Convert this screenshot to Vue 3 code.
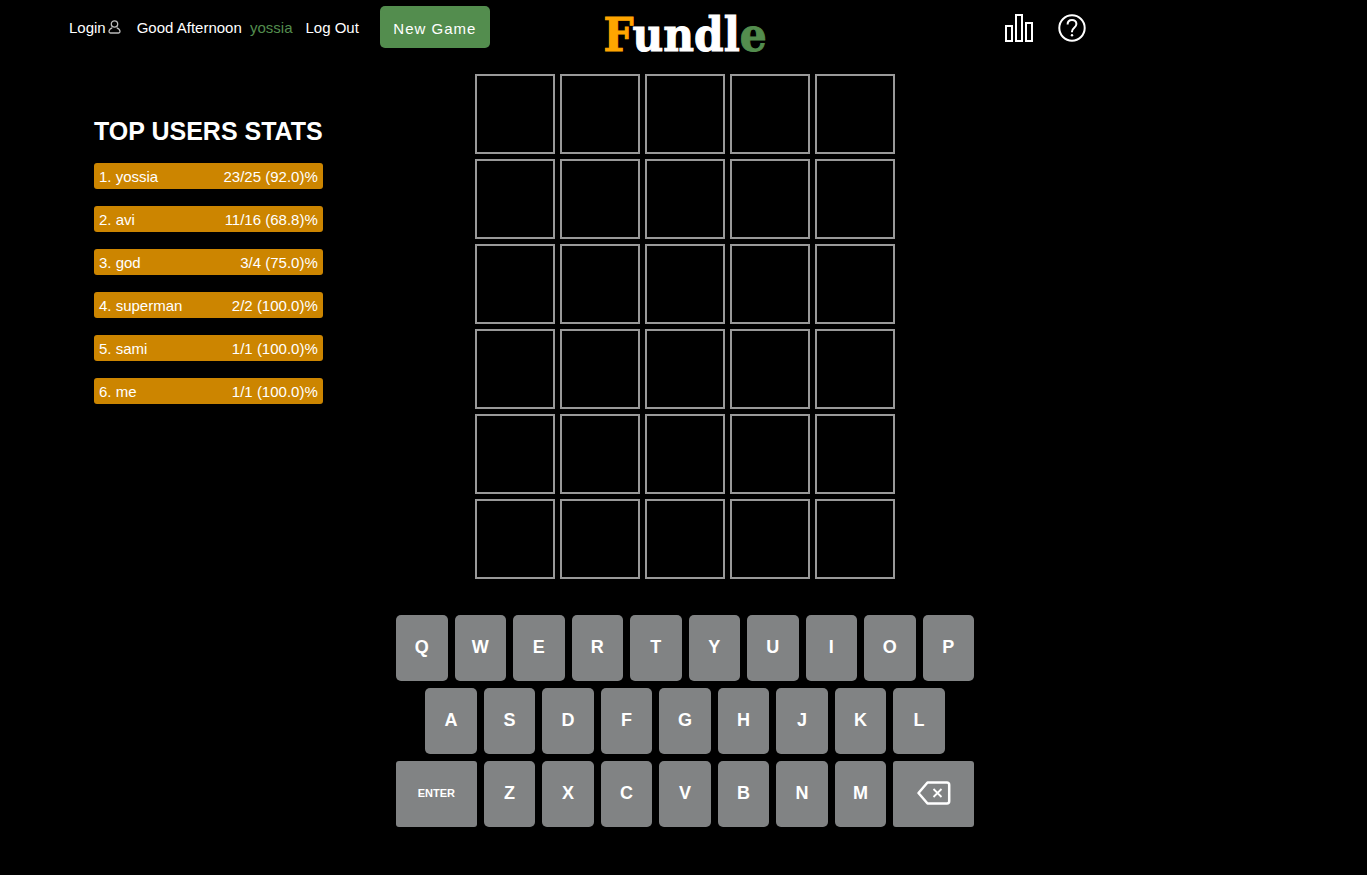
<script setup>
const users = [
  { name: 'yossia', score: '23/25 (92.0)%' },
  { name: 'avi', score: '11/16 (68.8)%' },
  { name: 'god', score: '3/4 (75.0)%' },
  { name: 'superman', score: '2/2 (100.0)%' },
  { name: 'sami', score: '1/1 (100.0)%' },
  { name: 'me', score: '1/1 (100.0)%' },
]
const topRow = [...'QWERTYUIOP']
const middleRow = [...'ASDFGHJKL']
const bottomRow = [...'ZXCVBNM']
</script>

<template>
  <div class="page">
    <header class="header">
      <nav class="nav">
        <a href="#" class="login">Login<svg class="user-icon" viewBox="0 0 13 14" aria-hidden="true">
            <circle cx="6.5" cy="4" r="3.2" />
            <path d="M4.2 7.800C2 8.600 1 9.800 1 11.600c0 1 .5 1.400 1.400 1.400h8.200c.9 0 1.400-.4 1.400-1.400 0-1.800-1-3-3.200-3.800" />
          </svg></a>
        <span class="greeting">Good Afternoon <span class="username">yossia</span></span>
        <a href="#" class="logout">Log Out</a>
        <button type="button" class="new-game">New Game</button>
      </nav>
      <h1 class="logo"><span class="logo-first">F</span>undl<span class="logo-last">e</span></h1>
      <div class="tools">
        <button type="button" class="tool" aria-label="Statistics">
          <svg viewBox="0 0 28 28" aria-hidden="true">
            <path d="M1 12h6v15H1zM11 1h6v26h-6zM21 9h6v18h-6z" />
          </svg>
        </button>
        <button type="button" class="tool" aria-label="Help">
          <svg viewBox="0 0 28 28" aria-hidden="true">
            <circle cx="14" cy="14" r="12.700" />
            <path d="M9.600 10.500C9.600 7.500 11.500 6 14 6s4.400 1.600 4.400 4c0 3.600-4.400 3.700-4.400 7.500v.700" />
            <circle class="dot" cx="14" cy="21.200" r="1.200" />
          </svg>
        </button>
      </div>
    </header>

    <div class="content">
      <aside class="stats">
        <h2 class="stats-title">TOP USERS STATS</h2>
        <ol class="stats-list">
          <li v-for="(user, i) in users" :key="user.name" class="stats-item">
            <span>{{ i + 1 }}. {{ user.name }}</span>
            <span>{{ user.score }}</span>
          </li>
        </ol>
      </aside>

      <main class="game">
        <div class="board">
          <div v-for="n in 30" :key="n" class="tile"></div>
        </div>
        <div class="keyboard">
          <button v-for="k in topRow" :key="k" type="button" class="key">{{ k }}</button>
          <button v-for="k in middleRow" :key="k" type="button" class="key" :class="{ indent: k === 'A' }">{{ k }}</button>
          <button type="button" class="key wide row-start">ENTER</button>
          <button v-for="k in bottomRow" :key="k" type="button" class="key">{{ k }}</button>
          <button type="button" class="key wide" aria-label="Backspace">
            <svg class="backspace" viewBox="0 0 34 24" aria-hidden="true">
              <path d="M10.500 1.500H30a2.200 2.200 0 0 1 2.200 2.200v16.600A2.200 2.200 0 0 1 30 22.500H10.500L1.500 12z" />
              <path class="cross" d="M16.500 8l8 8M24.500 8l-8 8" />
            </svg>
          </button>
        </div>
      </main>
    </div>
  </div>
</template>

<style>
html,
body {
  margin: 0;
  background: #000;
}
</style>

<style scoped>
.page {
  min-height: 100vh;
  box-sizing: border-box;
  padding-left: 3px;
  background: #000;
  color: #fff;
  font-family: "Liberation Sans", Arial, sans-serif;
  font-size: 15px;
}

button {
  font-family: inherit;
  border: 0;
  color: #fff;
  cursor: pointer;
}

a {
  color: #fff;
  text-decoration: none;
}

.header {
  display: grid;
  grid-template-columns: 1fr auto 1fr;
  align-items: start;
  padding: 6px 0 11px;
}

.nav {
  display: flex;
  align-items: center;
  height: 42px;
  padding-left: 66px;
  white-space: nowrap;
}

.login {
  display: flex;
  align-items: center;
  gap: 2px;
  margin-right: 16px;
}

.user-icon {
  width: 13px;
  height: 14px;
  fill: none;
  stroke: #bbb;
  stroke-width: 1.300;
}

.greeting {
  margin-right: 13px;
}

.username {
  margin-left: 4px;
  color: #538d4e;
}

.logout {
  margin-right: 21px;
}

.new-game {
  min-width: 110px;
  height: 42px;
  padding: 2px 12px 0;
  border-radius: 5px;
  background: #538d4e;
  font-size: 15px;
  letter-spacing: 1px;
}

.logo {
  margin: 0;
  font-family: "DejaVu Serif Condensed", "DejaVu Serif", serif;
  font-size: 47px;
  line-height: 57px;
  font-weight: 700;
  -webkit-text-stroke: 1px currentColor;
}

.logo-first {
  color: orange;
}

.logo-last {
  color: #538d4e;
}

.tools {
  display: flex;
  align-items: center;
  justify-content: flex-end;
  gap: 25px;
  height: 44px;
  padding-right: 281px;
}

.tool {
  padding: 0;
  background: none;
}

.tool svg {
  display: block;
  width: 28px;
  height: 28px;
  fill: none;
  stroke: #fff;
  stroke-width: 2;
}

.tool .dot {
  fill: #fff;
  stroke: none;
}

.content {
  display: grid;
  grid-template-columns: 1fr 578px 1fr;
}

.stats {
  justify-self: start;
  margin: 43px 0 0 91px;
}

.stats-title {
  margin: 0 0 18px;
  font-size: 25px;
  line-height: 28px;
  white-space: nowrap;
}

.stats-list {
  display: grid;
  gap: 17px;
  margin: 0;
  padding: 0;
  list-style: none;
}

.stats-item {
  display: flex;
  justify-content: space-between;
  padding: 2px 5px 0;
  border-radius: 3px;
  background: #cc8500;
  line-height: 24px;
}

.game {
  display: grid;
  gap: 36px;
}

.board {
  display: grid;
  grid-template-columns: repeat(5, 80px);
  grid-auto-rows: 80px;
  gap: 5px;
  justify-content: center;
}

.tile {
  border: 2px solid #999;
}

.keyboard {
  display: grid;
  grid-template-columns: repeat(20, 1fr);
  grid-auto-rows: 66px;
  gap: 7px;
}

.key {
  grid-column: span 2;
  min-width: 0;
  padding: 0 0 2px;
  border-radius: 5px;
  background: #818384;
  font-size: 18px;
  font-weight: 700;
}

.indent {
  grid-column: 2 / span 2;
}

.wide {
  grid-column: span 3;
  border-radius: 3px;
  font-size: 11px;
}

.row-start {
  grid-column: 1 / span 3;
}

.backspace {
  display: block;
  width: 34px;
  height: 24px;
  margin: 0 auto;
  fill: none;
  stroke: #fff;
  stroke-width: 2.500;
  stroke-linejoin: round;
}

.cross {
  stroke-width: 1.800;
}
</style>
